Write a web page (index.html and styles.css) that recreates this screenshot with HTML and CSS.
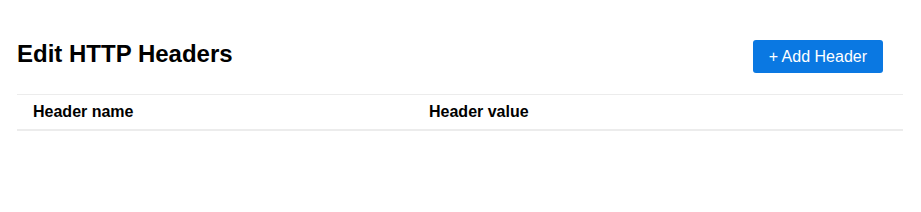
FILE: index.html
```html
<!doctype html>
<html>
  <head>
    <title>Edit HTTP Headers</title>
    <link rel="stylesheet" href="styles.css">
  </head>
  <body>
    <div class="headers-panel">
      <div class="panel-top">
        <h2 class="panel-title">Edit HTTP Headers</h2>
        <button class="add-button" id="addButton">+ Add Header</button>
      </div>

      <table class="headers-table">
        <thead>
          <tr>
            <th class="name-col">Header name</th>
            <th>Header value</th>
          </tr>
        </thead>
        <tbody id="headerRows"></tbody>
      </table>
    </div>
  </body>
</html>
```

FILE: styles.css
```css
body {
  font-family: "Liberation Sans", Arial, sans-serif;
  margin: 0;
  padding: 0;
  background-color: #fff;
  color: #000;
}
.headers-panel {
  padding: 40px 18px 0 17px;
}
.panel-top {
  display: flex;
  justify-content: space-between;
  align-items: flex-start;
}
.panel-title {
  margin: 0;
  font-size: 24px;
  line-height: 28px;
  font-weight: bold;
}
.add-button {
  margin-right: 20px;
  padding: 8px 16px;
  border: none;
  border-radius: 3px;
  background-color: #0a78e2;
  color: #fff;
  font-family: inherit;
  font-size: 16px;
  line-height: 17px;
  cursor: pointer;
}
.headers-table {
  width: 100%;
  margin-top: 21px;
  border-collapse: collapse;
}
.headers-table th {
  text-align: left;
  font-size: 16px;
  font-weight: bold;
  line-height: 18px;
  padding: 8px 16px;
  border-top: 1px solid #ececec;
  border-bottom: 2px solid #ececec;
}
.name-col {
  width: 364px;
}
```
